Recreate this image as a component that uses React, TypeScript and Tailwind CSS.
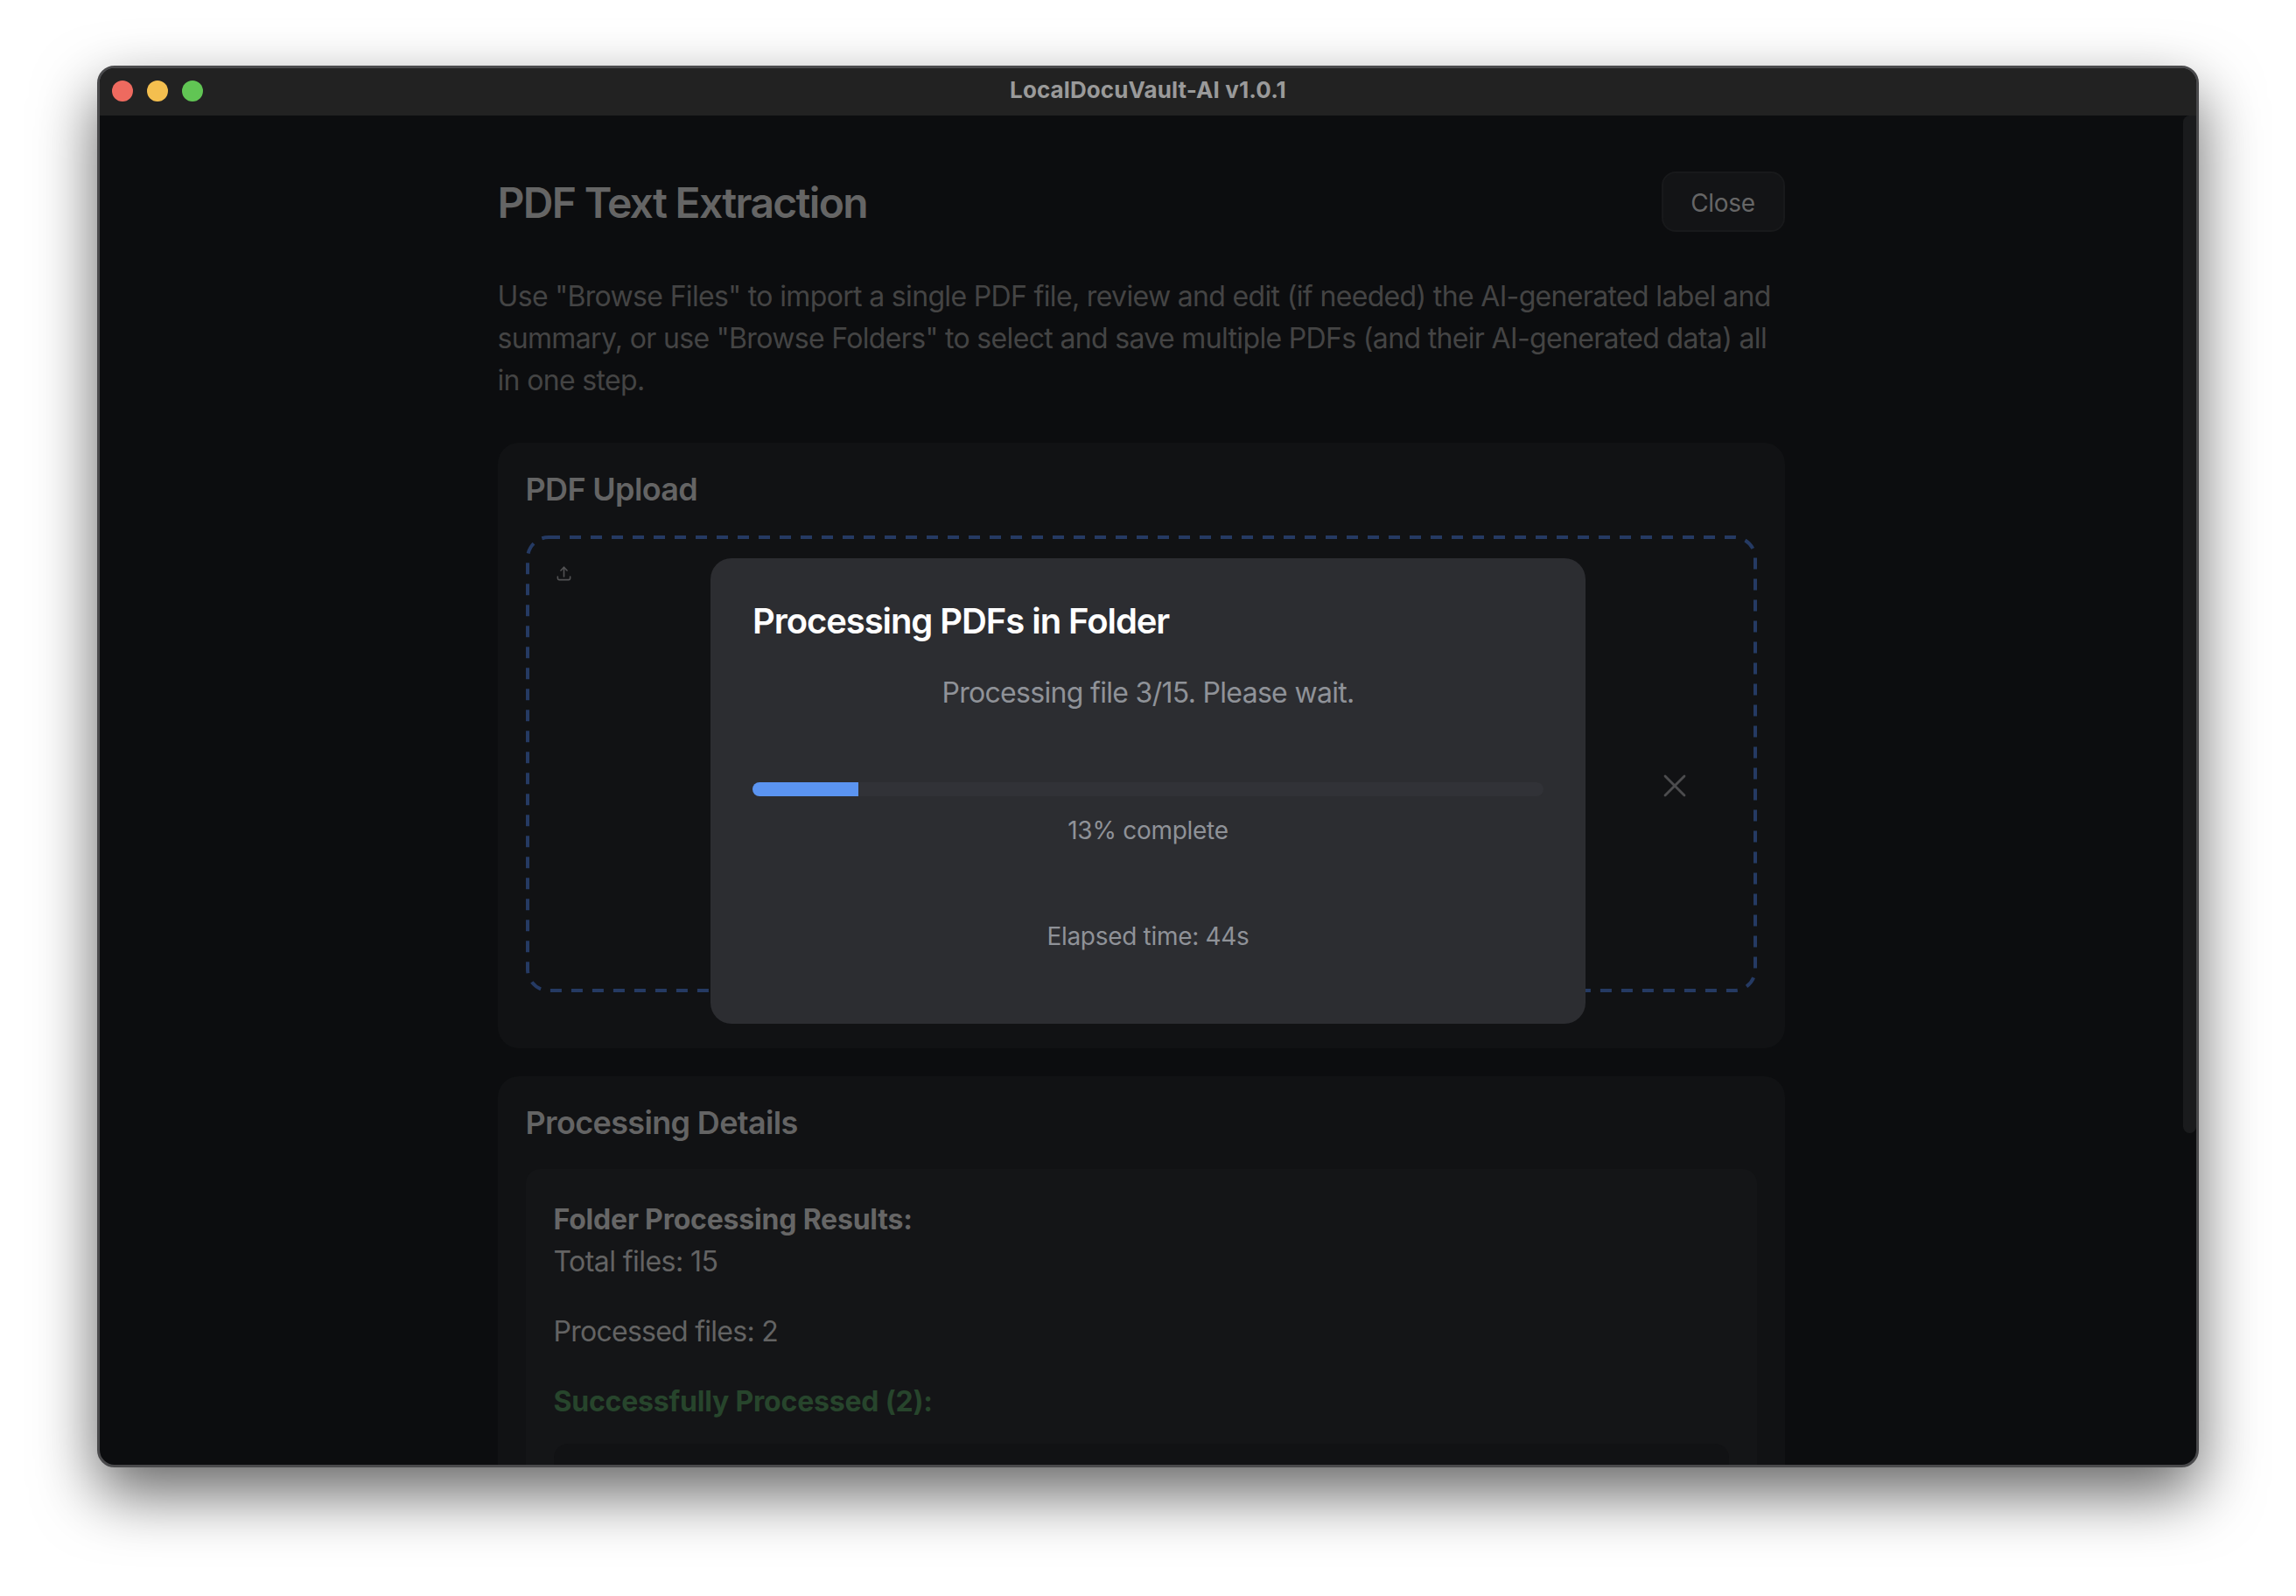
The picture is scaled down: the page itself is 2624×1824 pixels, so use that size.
import { X } from "lucide-react";

const font = "font-['Inter','Noto_Sans',sans-serif]";

function UploadIcon() {
  return (
    <svg width="19" height="19" viewBox="0 0 24 24" fill="none" stroke="#525254" strokeWidth="2" strokeLinecap="round" strokeLinejoin="round" aria-hidden="true">
      <path d="M3 16.5v2.25A2.25 2.25 0 0 0 5.25 21h13.5A2.25 2.25 0 0 0 21 18.75V16.5" />
      <path d="M7.5 7.5 12 3l4.5 4.5" />
      <path d="M12 3v13.5" />
    </svg>
  );
}

function ProgressDialog() {
  return (
    <div className="absolute inset-0 flex items-center justify-center pt-[2px]">
      <div className="h-[532px] w-[1000px] rounded-3xl bg-[#2c2d31] px-12 pt-12">
        <h2 className="text-[40px] leading-[48px] font-semibold tracking-[-1.07px] text-white">Processing PDFs in Folder</h2>
        <p className="mt-[34px] text-center text-[32px] leading-[48px] tracking-[-0.69px] text-[#8f9298]">Processing file 3/15. Please wait.</p>
        <div className="mt-[78px] h-4 w-full overflow-hidden rounded-lg bg-[#313237]">
          <div className="h-full bg-[#5b94f1]" style={{ width: `${(2 / 15) * 100}%` }} />
        </div>
        <p className="mt-[19px] text-center text-[28px] leading-10 tracking-[-0.28px] text-[#8f9298]">13% complete</p>
        <p className="mt-[81px] text-center text-[28px] leading-10 tracking-[-0.3px] text-[#8f9298]">Elapsed time: 44s</p>
      </div>
    </div>
  );
}

export default function App() {
  return (
    <div className={`flex h-[1824px] w-[2624px] items-start overflow-hidden bg-white pt-[75px] pl-[111px] antialiased ${font}`}>
      <div className="relative flex h-[1602px] w-[2402px] flex-col overflow-hidden rounded-[20px] border-[3px] border-[#4a4a4c] bg-[#0c0d0f] shadow-[0_30px_70px_rgba(0,0,0,0.6)]">
        <div className="relative flex h-[54px] shrink-0 items-center justify-center bg-[#222222] pb-[6px]">
          <div className="absolute top-[14px] left-[14px] flex gap-4">
            <span className="h-6 w-6 rounded-full bg-[#ee6a5f]" />
            <span className="h-6 w-6 rounded-full bg-[#f4bf4f]" />
            <span className="h-6 w-6 rounded-full bg-[#61c554]" />
          </div>
          <span className="text-[26px] font-bold tracking-[0.1px] text-[#9a9a9a]">LocalDocuVault-AI v1.0.1</span>
        </div>

        <div className="relative min-h-0 flex-1 overflow-hidden pr-4">
          <div className="absolute top-0 right-0 h-[1163px] w-[15px] rounded-b-lg rounded-tl-lg bg-[#1a1b1d]" />

          <div className="mx-auto w-[1471px] pt-16">
            <div className="flex items-center justify-between">
              <h1 className="pt-[3px] text-[48px] leading-[66px] font-semibold tracking-[-1.7px] text-[#656565]">PDF Text Extraction</h1>
              <button className="h-[69px] w-[141px] rounded-2xl border-2 border-[#18191b] bg-[#131416] pt-[2px] text-[28px] tracking-[-0.33px] text-[#666666]">Close</button>
            </div>

            <p className="mt-[50px] mb-[-1px] text-[32px] leading-12 tracking-[-0.66px] text-[#444444]">
              Use "Browse Files" to import a single PDF file, review and edit (if needed) the AI-generated label and summary, or use "Browse Folders" to select and save multiple PDFs (and their AI-generated data) all in one step.
            </p>

            <section className="mt-12 h-[692px] rounded-3xl bg-[#111214] px-8 pt-[33px]">
              <h2 className="text-[36px] leading-10 font-semibold tracking-[-0.67px] text-[#646464]">PDF Upload</h2>
              <div className="relative mt-[33px] flex h-[522px] items-start rounded-3xl pt-[34px] pl-[34px]">
                <svg className="absolute inset-0 h-full w-full" fill="none" aria-hidden="true">
                  <rect x="2" y="2" width="1403" height="518" rx="24" stroke="#253a63" strokeWidth="4" strokeDasharray="13 11" />
                </svg>
                <UploadIcon />
                <X className="absolute top-[264px] right-[72px] h-11 w-11 text-[#4c4c4e]" strokeWidth={1.5} />
              </div>
            </section>

            <section className="mt-8 rounded-3xl bg-[#111214] px-8 pt-[33px]">
              <h2 className="text-[36px] leading-10 font-semibold tracking-[-0.65px] text-[#646464]">Processing Details</h2>
              <div className="mt-[33px] rounded-2xl bg-[#141517] px-8 pt-[34px] pb-8">
                <p className="text-[32px] leading-12 font-bold tracking-[-0.2px] text-[#666666]">Folder Processing Results:</p>
                <p className="text-[32px] leading-12 tracking-[-0.56px] text-[#636363]">Total files: 15</p>
                <p className="mt-8 text-[32px] leading-12 tracking-[-0.74px] text-[#636363]">Processed files: 2</p>
                <p className="mt-8 text-[32px] leading-12 font-bold tracking-[-0.2px] text-[#27452c]">Successfully Processed (2):</p>
                <div className="mt-6 h-40 rounded-2xl bg-[#111214]" />
              </div>
            </section>
          </div>

          <ProgressDialog />
        </div>
      </div>
    </div>
  );
}
